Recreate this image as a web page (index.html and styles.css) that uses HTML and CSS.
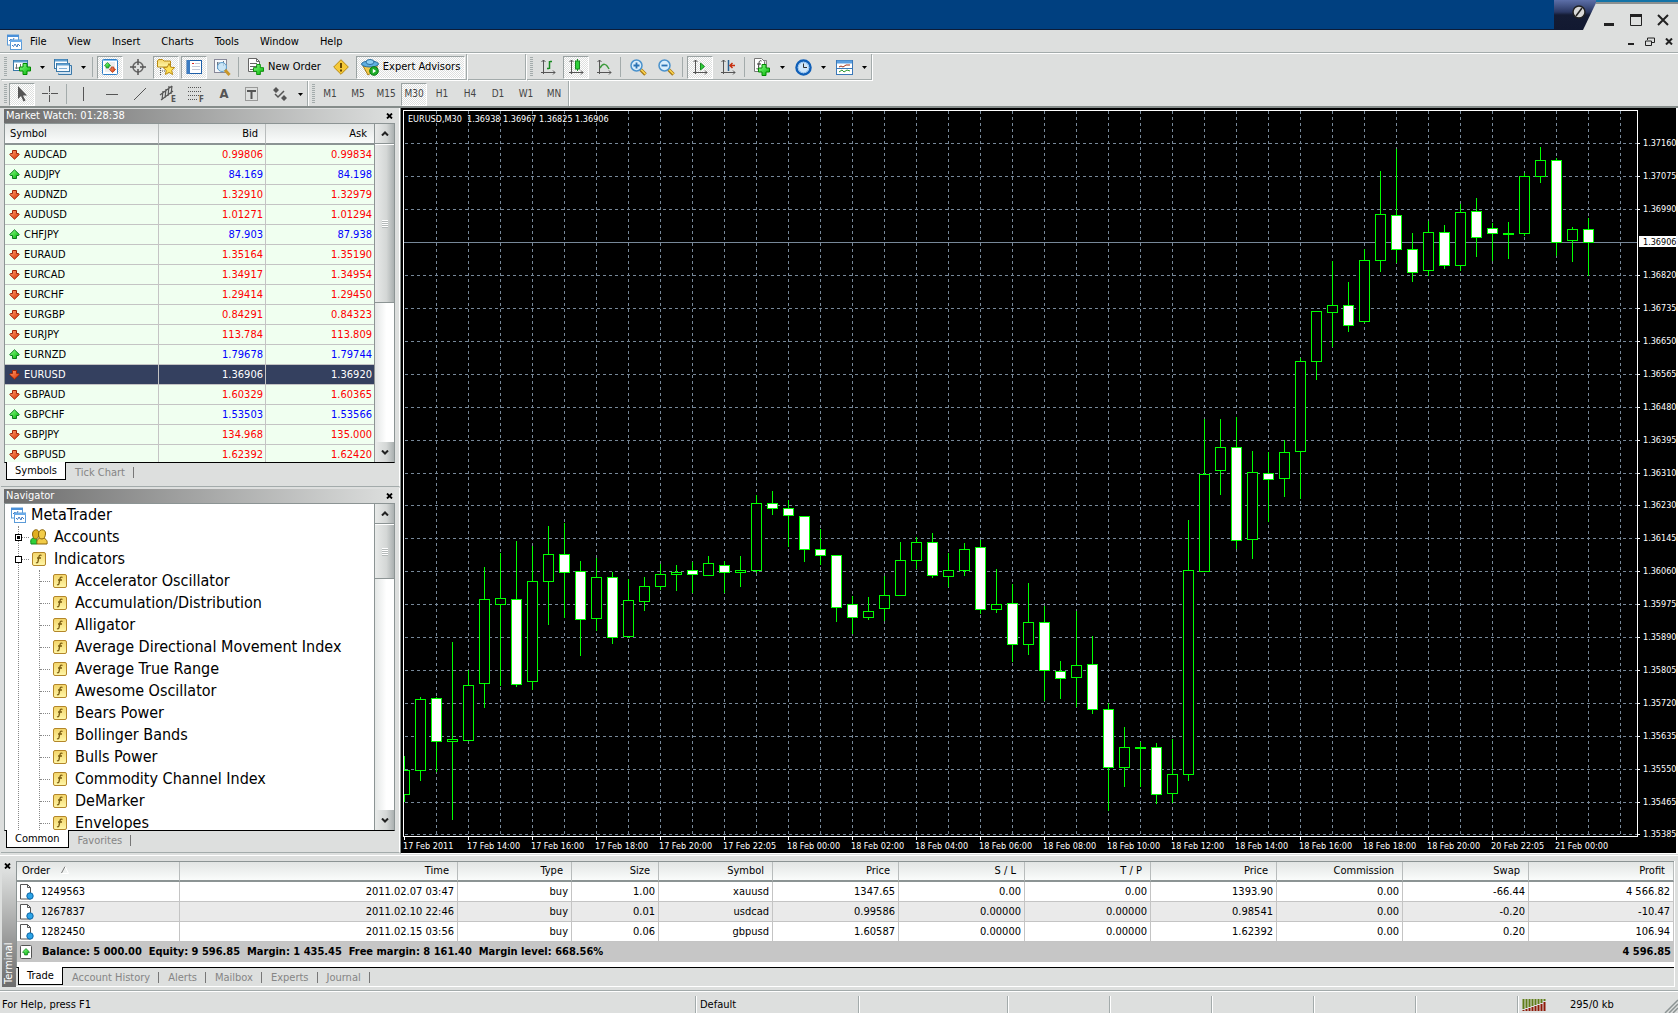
FILE: index.html
```html
<!DOCTYPE html>
<html lang="en">
<head>
<meta charset="utf-8">
<title>MetaTrader</title>
<link rel="stylesheet" href="styles.css">
</head>
<body>
<svg class="sprite" aria-hidden="true">
  <defs>
    <linearGradient id="gGreen" x1="0" y1="0" x2="1" y2="1"><stop offset="0" stop-color="#8dff8d"/><stop offset="1" stop-color="#00b400"/></linearGradient>
    <linearGradient id="gGold" x1="0" y1="0" x2="0" y2="1"><stop offset="0" stop-color="#f3d469"/><stop offset="1" stop-color="#fff7a8"/></linearGradient>
    <linearGradient id="gRed" x1="0" y1="0" x2="1" y2="1"><stop offset="0" stop-color="#ffa070"/><stop offset="1" stop-color="#d83000"/></linearGradient>
    <linearGradient id="gNavy" x1="0" y1="0" x2="0" y2="1"><stop offset="0" stop-color="#5c6fa8"/><stop offset=".4" stop-color="#2b3863"/><stop offset=".5" stop-color="#141b33"/><stop offset="1" stop-color="#121931"/></linearGradient>
  </defs>
  <symbol id="app" viewBox="0 0 16 16"><rect x="1.500" y="1" width="11" height="10" fill="#fff" stroke="#5b9bd8"/><path d="M1 2h12" stroke="#4a90d9" stroke-width="2"/><path d="M3 7l2-2 1 3 2-4" stroke="#3d78c0" fill="none"/><rect x="4.500" y="6" width="11" height="9.500" fill="#fff" stroke="#5b9bd8"/><path d="M4 7h12" stroke="#6aaae8" stroke-width="2"/><path d="M6 11l1.500 1.500L9 10l2 3 1-3 2 2" stroke="#3d78c0" fill="none"/></symbol>
  <symbol id="plus" viewBox="0 0 12 12"><path d="M4 .5h4V4h3.500v4H8v3.500H4V8H.5V4H4z" fill="url(#gGreen)" stroke="#008a00"/></symbol>
  <symbol id="newchart" viewBox="0 0 18 16"><rect x=".5" y="1.500" width="14" height="10" fill="#fff" stroke="#3a78a8"/><path d="M1 2.500h13" stroke="#5f9fd0" stroke-width="2"/><path d="M3.500 5v5M2 9h6M7.500 5v3" stroke="#777"/><use href="#plus" x="6" y="4" width="12" height="12"/></symbol>
  <symbol id="profiles" viewBox="0 0 18 16"><path d="M4.500 14.500v1h13v-9h-2" fill="#cfe2f2" stroke="#3a78a8"/><rect x=".5" y=".5" width="13" height="9" fill="#fff" stroke="#3a78a8"/><path d="M1 1.500h12" stroke="#5f9fd0" stroke-width="2"/><rect x="2.500" y="4.500" width="13" height="8" fill="#f4f9fd" stroke="#3a78a8"/><path d="M3 5.500h12" stroke="#5f9fd0" stroke-width="2"/><path d="M5 9.500h8" stroke="#7fb0d8"/></symbol>
  <symbol id="up" viewBox="0 0 11 11"><path d="M5.500 .8L10.300 5.500 9.500 6.500H7.500V9.500h-4V6.500H1.500L.7 5.500z" fill="url(#gGreen)" stroke="#0b7a1e"/></symbol>
  <symbol id="down" viewBox="0 0 11 11"><path d="M5.500 10.200L.7 5.500 1.500 4.500h2V1.500h4v3h2l.8 1z" fill="url(#gRed)" stroke="#a02408"/></symbol>
  <symbol id="watch" viewBox="0 0 16 16"><rect x=".5" y=".5" width="15" height="15" rx="1" fill="#fff" stroke="#2f7fc8"/><path d="M1 1.500h14" stroke="#8cc2ee"/><path d="M3 4h10M3 6h10M3 8h10M3 10h10M3 12h10" stroke="#ddd"/><use href="#up" x="2" y="3" width="7" height="7"/><use href="#down" x="7" y="7" width="7" height="7"/></symbol>
  <symbol id="cross" viewBox="0 0 16 16"><circle cx="8" cy="8" r="5" fill="none" stroke="#666" stroke-width="1.500"/><path d="M8 0v6M8 10v6M0 8h6M10 8h6" stroke="#555" stroke-width="1.500"/></symbol>
  <symbol id="favs" viewBox="0 0 18 16"><path d="M.5 2l1-1.500h4L7 2h6.500v6H.5z" fill="url(#gGold)" stroke="#b98a12"/><path d="M3.500 9v7M5 12h3" stroke="#555" stroke-dasharray="1 1"/><path d="M12 4.500l1.700 3.700 4 .4-3 2.800.9 4.100-3.600-2.100-3.600 2.100.9-4.100-3-2.800 4-.4z" fill="#ffe255" stroke="#b98a12"/></symbol>
  <symbol id="termwin" viewBox="0 0 16 16"><rect x="1" y="1.500" width="14.500" height="13" fill="#fff" stroke="#1e5fa8"/><path d="M2.500 1v14" stroke="#3c7cc2" stroke-width="3"/><path d="M6 4.500h2" stroke="#d22"/><path d="M9 4.500h5M6 7.500h8M6 10.500h8" stroke="#c4c8d8"/></symbol>
  <symbol id="tester" viewBox="0 0 18 17"><rect x="1.500" y=".5" width="12" height="13" fill="#f5f8fb" stroke="#889"/><path d="M4.500 3v7M4.500 4h3M10.500 2v5" stroke="#678"/><circle cx="9" cy="8" r="4.500" fill="#bfe0f5" fill-opacity=".8" stroke="#5fa0d0"/><path d="M12 11l4.500 5" stroke="#c8962a" stroke-width="3"/></symbol>
  <symbol id="order" viewBox="0 0 16 18"><path d="M.5.5h8l3 3v10H.5z" fill="#fff" stroke="#666"/><path d="M8.500.5v3h3M2 5.500h7M2 8.500h7M2 11.500h5" stroke="#666" fill="none"/><use href="#plus" x="5" y="6" width="11" height="11"/></symbol>
  <symbol id="warn" viewBox="0 0 16 16"><path d="M8 .7L15.300 8 8 15.300.7 8z" fill="#f5c938" stroke="#b98a12"/><path d="M8 4v5M8 10.500v2" stroke="#6a4a00" stroke-width="2"/></symbol>
  <symbol id="expert" viewBox="0 0 18 17"><path d="M2 7l5 9 9-6 0-4z" fill="#f2c84a" stroke="#a57a10"/><ellipse cx="9" cy="5" rx="8.500" ry="3" fill="#5faee0" stroke="#2c6f9f"/><ellipse cx="9" cy="3" rx="4" ry="2.500" fill="#8fd0f5" stroke="#2c6f9f"/><circle cx="13" cy="12" r="4.300" fill="#1fae2a" stroke="#0a7a14"/><path d="M11.800 9.800v4.400l3.300-2.200z" fill="#fff"/></symbol>
  <symbol id="bars" viewBox="0 0 16 16"><path d="M3.500 1v14M1 13.500h14" stroke="#555" fill="none"/><path d="M1.500 3l2-2 2 2M13 11.500l2 2-2 2" stroke="#555" fill="none"/><path d="M9.500 2v8M9 9.500H7M10 2.500h2" stroke="#178a20" stroke-width="1.500"/></symbol>
  <symbol id="candle" viewBox="0 0 16 16"><path d="M3.500 1v14M1 13.500h14" stroke="#555" fill="none"/><path d="M1.500 3l2-2 2 2M13 11.500l2 2-2 2" stroke="#555" fill="none"/><path d="M9.500 0v12" stroke="#178a20"/><rect x="7.500" y="2" width="4" height="8" fill="#2ed03a" stroke="#178a20"/></symbol>
  <symbol id="line" viewBox="0 0 16 16"><path d="M3.500 1v14M1 13.500h14" stroke="#555" fill="none"/><path d="M1.500 3l2-2 2 2M13 11.500l2 2-2 2" stroke="#555" fill="none"/><path d="M4 9c3-5 6-5 9 1" stroke="#3a9a3a" stroke-width="1.500" fill="none"/></symbol>
  <symbol id="zin" viewBox="0 0 17 17"><path d="M10.500 10.500l5 5" stroke="#a87a18" stroke-width="3.500"/><path d="M11 10.500l4.500 4.500" stroke="#ffd850" stroke-width="1.500"/><circle cx="6.500" cy="6.500" r="5.500" fill="#d8edfb" stroke="#4a92cc" stroke-width="1.500"/><path d="M6.500 3.500v6M3.500 6.500h6" stroke="#2a72b4" stroke-width="1.800"/></symbol>
  <symbol id="zout" viewBox="0 0 17 17"><path d="M10.500 10.500l5 5" stroke="#a87a18" stroke-width="3.500"/><path d="M11 10.500l4.500 4.500" stroke="#ffd850" stroke-width="1.500"/><circle cx="6.500" cy="6.500" r="5.500" fill="#d8edfb" stroke="#4a92cc" stroke-width="1.500"/><path d="M3.500 6.500h6" stroke="#2a72b4" stroke-width="1.800"/></symbol>
  <symbol id="scroll" viewBox="0 0 16 16"><path d="M3.500 1v14M1 13.500h14" stroke="#555" fill="none"/><path d="M1.500 3l2-2 2 2M13 11.500l2 2-2 2" stroke="#555" fill="none"/><path d="M8.500 4l4 3.500-4 3.500z" fill="#2ed03a" stroke="#178a20"/></symbol>
  <symbol id="shift" viewBox="0 0 16 16"><path d="M3.500 1v14M1 13.500h14" stroke="#555" fill="none"/><path d="M1.500 3l2-2 2 2M13 11.500l2 2-2 2" stroke="#555" fill="none"/><path d="M8.500 1v11" stroke="#2a6090" stroke-width="1.500"/><path d="M10 6.500h5M12.500 4L10 6.500 12.500 9" stroke="#c83010" stroke-width="1.500" fill="none"/></symbol>
  <symbol id="clock" viewBox="0 0 17 17"><circle cx="8.500" cy="8.500" r="7" fill="#fff" stroke="#0f5fb8" stroke-width="2.500"/><circle cx="8.500" cy="8.500" r="5.300" fill="#cfe6fa" stroke="#8fc0ee"/><path d="M8.500 4.500v4h3.500" stroke="#333" fill="none"/></symbol>
  <symbol id="template" viewBox="0 0 17 15"><rect x=".5" y=".5" width="16" height="14" fill="#fff" stroke="#3a78b8"/><path d="M1 2h15" stroke="#5a9fe0" stroke-width="3"/><path d="M3 7l2-1 2 1 3-2 4 0" stroke="#a03018" fill="none"/><path d="M1 8.500h15" stroke="#3a78b8"/><path d="M3 12l3-2 2 2 3-2 3 1" stroke="#2a9a30" fill="none"/></symbol>
  <symbol id="dd" viewBox="0 0 5 3"><path d="M0 0h5L2.500 3z" fill="#000"/></symbol>
  <symbol id="cursor" viewBox="0 0 16 16"><path d="M4 0v13l3-3 2.500 5.500 2-1L9 9.500h4z" fill="#555"/></symbol>
  <symbol id="hair" viewBox="0 0 16 16"><path d="M7.500 0v6M7.500 9v7M0 7.500h6M9 7.500h7" stroke="#555"/><path d="M7 7h1v1H7z" fill="#555"/></symbol>
  <symbol id="vline" viewBox="0 0 16 16"><path d="M7.500 1v14" stroke="#555"/></symbol>
  <symbol id="hline" viewBox="0 0 16 16"><path d="M2 8.500h12" stroke="#555"/></symbol>
  <symbol id="tline" viewBox="0 0 16 16"><path d="M2 14L14 2" stroke="#555"/></symbol>
  <symbol id="label" viewBox="0 0 16 16"><rect x="1.500" y="1.500" width="12" height="13" fill="none" stroke="#555" stroke-dasharray="1 1"/><path d="M3 5h9M7.500 5v8" stroke="#555" stroke-width="2"/></symbol>
  <symbol id="arrows" viewBox="0 0 16 16"><path d="M1 4l3-3 3 3-3 3zM9 12l3-3 3 3-3 3z" fill="#555"/><path d="M3 8l3 3 6-6" stroke="#555" stroke-width="1.500" fill="none"/></symbol>
  <symbol id="close" viewBox="0 0 7 6"><path d="M1 .5l5 5M6 .5l-5 5" stroke="#000" stroke-width="1.800"/></symbol>
  <symbol id="chevup" viewBox="0 0 8 5"><path d="M1 4.500l3-3 3 3" stroke="#222" stroke-width="2" fill="none"/></symbol>
  <symbol id="chevdn" viewBox="0 0 8 5"><path d="M1 .5l3 3 3-3" stroke="#222" stroke-width="2" fill="none"/></symbol>
  <symbol id="func" viewBox="0 0 14 14"><rect x=".5" y=".5" width="13" height="13" rx="1.500" fill="url(#gGold)" stroke="#b3862a"/><path d="M9.500 3.500c-1.500-1-2.300 0-2.600 1.500L6 9.500c-.3 1.300-1 1.600-2 1M5 6h4" fill="none" stroke="#7a5c10" stroke-width="1.300"/></symbol>
  <symbol id="people" viewBox="0 0 18 16"><path d="M1 15c-1-5 1-6 3-6s4 2 3 6z" fill="#2fd03a" stroke="#0f8a1c"/><path d="M2.500 5c0-5 6-6 6.500-1 0 3-1 6-3 6S2.500 8 2.500 5z" fill="#e0ae20" stroke="#8a6508"/><path d="M7 15c-1-5 2-6 5-6s6 2 5 6z" fill="#f2cc48" stroke="#8a6508"/><path d="M8.500 5c0-5 6.500-6 7-1 0 3-1 6-3.500 6S8.500 8 8.500 5z" fill="#f2cc48" stroke="#8a6508"/></symbol>
  <symbol id="doc" viewBox="0 0 14 16"><path d="M.5.5h7l3 3v11.500H.5z" fill="#fff" stroke="#555"/><path d="M7.500.5v3h3" fill="none" stroke="#555"/><circle cx="10" cy="12" r="3.200" fill="#2da3e6" stroke="#0d68a8"/></symbol>
  <symbol id="balance" viewBox="0 0 12 14"><rect x=".5" y=".5" width="11" height="13" rx="1" fill="#fff" stroke="#555"/><use href="#up" x="2" y="3" width="8" height="8"/></symbol>
</svg>

<header class="titlebar">
  <div class="titlebar-fill"></div>
  <svg class="titlebar-tab" viewBox="0 0 42 30" aria-hidden="true">
    <rect width="42" height="30" fill="#dddfde"/><path d="M0 0h42v3L29 30H0z" fill="url(#gNavy)"/>
    <circle cx="25" cy="12" r="6" fill="#d8d8d8" stroke="#222" stroke-width="1.500"/><path d="M22 16l6-8" stroke="#222" stroke-width="1.500"/>
  </svg>
  <div class="window-buttons">
    <button aria-label="Minimize"><svg width="12" height="12"><path d="M1 10.500h10" stroke="#222" stroke-width="3"/></svg></button>
    <button aria-label="Maximize"><svg width="12" height="12"><path d="M.5 1v10.500h11V1" fill="none" stroke="#222"/><path d="M0 1.500h12" stroke="#222" stroke-width="3"/></svg></button>
    <button aria-label="Close"><svg width="12" height="12"><path d="M1 1l10 10M11 1L1 11" stroke="#222" stroke-width="2"/></svg></button>
  </div>
</header>

<nav class="menubar">
  <svg class="menu-logo" width="16" height="16"><use href="#app"/></svg>
  <button>File</button><button>View</button><button>Insert</button><button>Charts</button><button>Tools</button><button>Window</button><button>Help</button>
  <div class="mdi-buttons">
    <button aria-label="Minimize chart"><svg width="8" height="8"><path d="M1 6h6" stroke="#222" stroke-width="2"/></svg></button>
    <button aria-label="Restore chart"><svg width="10" height="9"><path d="M2.500 3V1h7v4.500H7" fill="none" stroke="#222"/><path d="M.5 4h6v4.500h-6z" fill="#dddfde" stroke="#222"/></svg></button>
    <button aria-label="Close chart"><svg width="8" height="7"><path d="M1 .5l6 6M7 .5l-6 6" stroke="#222" stroke-width="2"/></svg></button>
  </div>
</nav>

<div class="toolbar">
  <div class="band">
    <i class="grip"></i>
    <button class="tb" aria-label="New chart"><svg width="18" height="16"><use href="#newchart"/></svg></button><button class="dd" aria-label="New chart menu"><svg width="5" height="3"><use href="#dd"/></svg></button>
    <button class="tb" aria-label="Profiles"><svg width="18" height="16"><use href="#profiles"/></svg></button><button class="dd" aria-label="Profiles menu"><svg width="5" height="3"><use href="#dd"/></svg></button>
    <i class="sep"></i>
    <button class="tb on" aria-label="Market Watch"><svg width="16" height="16"><use href="#watch"/></svg></button>
    <button class="tb" aria-label="Data Window"><svg width="16" height="16"><use href="#cross"/></svg></button>
    <button class="tb on" aria-label="Navigator"><svg width="18" height="16"><use href="#favs"/></svg></button>
    <button class="tb on" aria-label="Terminal"><svg width="16" height="16"><use href="#termwin"/></svg></button>
    <button class="tb" aria-label="Strategy Tester"><svg width="18" height="17"><use href="#tester"/></svg></button>
    <i class="sep"></i>
    <button class="tb wide"><svg width="16" height="18"><use href="#order"/></svg>New Order</button>
    <button class="tb" aria-label="MetaEditor"><svg width="16" height="16"><use href="#warn"/></svg></button>
    <button class="tb wide on"><svg width="18" height="17"><use href="#expert"/></svg>Expert Advisors</button>
  </div>
  <div class="band band-empty"></div>
  <div class="band">
    <i class="grip"></i>
    <button class="tb" aria-label="Bar chart"><svg width="16" height="16"><use href="#bars"/></svg></button>
    <button class="tb on" aria-label="Candlesticks"><svg width="16" height="16"><use href="#candle"/></svg></button>
    <button class="tb" aria-label="Line chart"><svg width="16" height="16"><use href="#line"/></svg></button>
    <i class="sep"></i>
    <button class="tb" aria-label="Zoom in"><svg width="17" height="17"><use href="#zin"/></svg></button>
    <button class="tb" aria-label="Zoom out"><svg width="17" height="17"><use href="#zout"/></svg></button>
    <i class="sep"></i>
    <button class="tb on" aria-label="Auto scroll"><svg width="16" height="16"><use href="#scroll"/></svg></button>
    <button class="tb" aria-label="Chart shift"><svg width="16" height="16"><use href="#shift"/></svg></button>
    <i class="sep"></i>
    <button class="tb" aria-label="Indicators"><svg width="16" height="18"><path d="M3.500 2.500h9v10" fill="none" stroke="#888"/><path d="M.5.5h7l3 3v10H.5z" fill="#fff" stroke="#777"/><path d="M7.500 3c-1.500-.8-2.200 0-2.400 1.500l-.6 5c-.2 1.500-1 1.800-2 1.200M3 6h4" fill="none" stroke="#333"/><use href="#plus" x="4" y="6" width="12" height="12"/></svg></button><button class="dd" aria-label="Indicators menu"><svg width="5" height="3"><use href="#dd"/></svg></button>
    <button class="tb" aria-label="Periods"><svg width="17" height="17"><use href="#clock"/></svg></button><button class="dd" aria-label="Periods menu"><svg width="5" height="3"><use href="#dd"/></svg></button>
    <button class="tb" aria-label="Templates"><svg width="17" height="15"><use href="#template"/></svg></button><button class="dd" aria-label="Templates menu"><svg width="5" height="3"><use href="#dd"/></svg></button>
  </div>
</div>

<div class="toolbar toolbar-last">
  <div class="band">
    <i class="grip"></i>
    <button class="tb on" aria-label="Cursor"><svg width="16" height="16"><use href="#cursor"/></svg></button>
    <button class="tb" aria-label="Crosshair"><svg width="16" height="16"><use href="#hair"/></svg></button>
    <i class="sep"></i>
    <button class="tb" aria-label="Vertical line"><svg width="16" height="16"><use href="#vline"/></svg></button>
    <button class="tb" aria-label="Horizontal line"><svg width="16" height="16"><use href="#hline"/></svg></button>
    <button class="tb" aria-label="Trendline"><svg width="16" height="16"><use href="#tline"/></svg></button>
    <button class="tb" aria-label="Equidistant channel"><svg width="18" height="18"><path d="M1 10L13 1M2 15L14 6M4 6l-1 9M7 4L6 13M10 1L9 11M13 1l-1 8" stroke="#555" stroke-width="1.200"/><text class="tag" x="12" y="17">E</text></svg></button>
    <button class="tb" aria-label="Fibonacci retracement"><svg width="18" height="18"><path d="M1 2.500h14M1 6.500h14M1 10.500h14M1 14.500h9" stroke="#555" stroke-dasharray="1 1"/><text class="tag" x="12" y="17">F</text></svg></button>
    <button class="tb tb-text">A</button>
    <button class="tb" aria-label="Text label"><svg width="16" height="16"><use href="#label"/></svg></button>
    <button class="tb" aria-label="Arrows"><svg width="16" height="16"><use href="#arrows"/></svg></button><button class="dd" aria-label="Arrows menu"><svg width="5" height="3"><use href="#dd"/></svg></button>
  </div>
  <div class="band">
    <i class="grip"></i>
    <button class="tb period">M1</button><button class="tb period">M5</button><button class="tb period">M15</button><button class="tb period on">M30</button><button class="tb period">H1</button><button class="tb period">H4</button><button class="tb period">D1</button><button class="tb period">W1</button><button class="tb period">MN</button>
  </div>
</div>

<main class="workspace">
  <aside class="side">
    <section class="panel">
      <div class="panel-title"><h2>Market Watch: 01:28:38</h2><button aria-label="Close Market Watch"><svg width="7" height="6"><use href="#close"/></svg></button></div>
      <div class="panel-body watch-body">
        <div class="scroll-content">
          <table class="quotes">
            <colgroup><col><col class="c-bid"><col class="c-ask"></colgroup>
            <thead><tr><th>Symbol</th><th>Bid</th><th>Ask</th></tr></thead>
            <tbody>
              <tr class="dn"><td><svg width="11" height="11"><use href="#down"/></svg>AUDCAD</td><td>0.99806</td><td>0.99834</td></tr>
              <tr class="up"><td><svg width="11" height="11"><use href="#up"/></svg>AUDJPY</td><td>84.169</td><td>84.198</td></tr>
              <tr class="dn"><td><svg width="11" height="11"><use href="#down"/></svg>AUDNZD</td><td>1.32910</td><td>1.32979</td></tr>
              <tr class="dn"><td><svg width="11" height="11"><use href="#down"/></svg>AUDUSD</td><td>1.01271</td><td>1.01294</td></tr>
              <tr class="up"><td><svg width="11" height="11"><use href="#up"/></svg>CHFJPY</td><td>87.903</td><td>87.938</td></tr>
              <tr class="dn"><td><svg width="11" height="11"><use href="#down"/></svg>EURAUD</td><td>1.35164</td><td>1.35190</td></tr>
              <tr class="dn"><td><svg width="11" height="11"><use href="#down"/></svg>EURCAD</td><td>1.34917</td><td>1.34954</td></tr>
              <tr class="dn"><td><svg width="11" height="11"><use href="#down"/></svg>EURCHF</td><td>1.29414</td><td>1.29450</td></tr>
              <tr class="dn"><td><svg width="11" height="11"><use href="#down"/></svg>EURGBP</td><td>0.84291</td><td>0.84323</td></tr>
              <tr class="dn"><td><svg width="11" height="11"><use href="#down"/></svg>EURJPY</td><td>113.784</td><td>113.809</td></tr>
              <tr class="up"><td><svg width="11" height="11"><use href="#up"/></svg>EURNZD</td><td>1.79678</td><td>1.79744</td></tr>
              <tr class="dn sel"><td><svg width="11" height="11"><use href="#down"/></svg>EURUSD</td><td>1.36906</td><td>1.36920</td></tr>
              <tr class="dn"><td><svg width="11" height="11"><use href="#down"/></svg>GBPAUD</td><td>1.60329</td><td>1.60365</td></tr>
              <tr class="up"><td><svg width="11" height="11"><use href="#up"/></svg>GBPCHF</td><td>1.53503</td><td>1.53566</td></tr>
              <tr class="dn"><td><svg width="11" height="11"><use href="#down"/></svg>GBPJPY</td><td>134.968</td><td>135.000</td></tr>
              <tr class="dn"><td><svg width="11" height="11"><use href="#down"/></svg>GBPUSD</td><td>1.62392</td><td>1.62420</td></tr>
            </tbody>
          </table>
        </div>
        <div class="scrollbar"><button aria-label="Scroll up"><svg width="8" height="5"><use href="#chevup"/></svg></button><div class="thumb thumb-long"></div><button class="last" aria-label="Scroll down"><svg width="8" height="5"><use href="#chevdn"/></svg></button></div>
      </div>
      <div class="tabs"><button class="active">Symbols</button><button>Tick Chart</button></div>
    </section>
    <section class="panel panel-grow">
      <div class="panel-title"><h2>Navigator</h2><button aria-label="Close Navigator"><svg width="7" height="6"><use href="#close"/></svg></button></div>
      <div class="panel-body">
        <div class="scroll-content tree">
          <div class="node root"><svg width="16" height="16"><use href="#app"/></svg>MetaTrader</div>
          <ul class="level1">
            <li><div class="node"><i class="box plus"></i><i class="dots"></i><svg class="people" width="18" height="16"><use href="#people"/></svg>Accounts</div></li>
            <li><div class="node"><i class="box"></i><i class="dots"></i><svg width="14" height="14"><use href="#func"/></svg>Indicators</div>
              <ul class="level2">
                <li class="node"><i class="dots"></i><svg width="14" height="14"><use href="#func"/></svg>Accelerator Oscillator</li>
                <li class="node"><i class="dots"></i><svg width="14" height="14"><use href="#func"/></svg>Accumulation/Distribution</li>
                <li class="node"><i class="dots"></i><svg width="14" height="14"><use href="#func"/></svg>Alligator</li>
                <li class="node"><i class="dots"></i><svg width="14" height="14"><use href="#func"/></svg>Average Directional Movement Index</li>
                <li class="node"><i class="dots"></i><svg width="14" height="14"><use href="#func"/></svg>Average True Range</li>
                <li class="node"><i class="dots"></i><svg width="14" height="14"><use href="#func"/></svg>Awesome Oscillator</li>
                <li class="node"><i class="dots"></i><svg width="14" height="14"><use href="#func"/></svg>Bears Power</li>
                <li class="node"><i class="dots"></i><svg width="14" height="14"><use href="#func"/></svg>Bollinger Bands</li>
                <li class="node"><i class="dots"></i><svg width="14" height="14"><use href="#func"/></svg>Bulls Power</li>
                <li class="node"><i class="dots"></i><svg width="14" height="14"><use href="#func"/></svg>Commodity Channel Index</li>
                <li class="node"><i class="dots"></i><svg width="14" height="14"><use href="#func"/></svg>DeMarker</li>
                <li class="node"><i class="dots"></i><svg width="14" height="14"><use href="#func"/></svg>Envelopes</li>
              </ul>
            </li>
          </ul>
        </div>
        <div class="scrollbar"><button aria-label="Scroll up"><svg width="8" height="5"><use href="#chevup"/></svg></button><div class="thumb"></div><button class="last" aria-label="Scroll down"><svg width="8" height="5"><use href="#chevdn"/></svg></button></div>
      </div>
      <div class="tabs"><button class="active">Common</button><button>Favorites</button></div>
    </section>
  </aside>
  <section class="chart"><svg id="chart" role="img" aria-label="EURUSD, 30 minute candlestick chart"></svg></section>
</main>

<section class="terminal">
  <div class="terminal-side"><button aria-label="Close Terminal"><svg width="7" height="6"><use href="#close"/></svg></button><h2>Terminal</h2></div>
  <div class="terminal-main">
    <table class="orders">
      <colgroup><col class="w-order"><col class="w-time"><col class="w-type"><col class="w-size"><col class="w-type"><col class="w-num"><col class="w-num"><col class="w-num"><col class="w-num"><col class="w-num"><col class="w-num"><col></colgroup>
      <thead><tr><th>Order <svg class="sort" width="8" height="8"><path d="M.5 7L4 .5" stroke="#777" fill="none"/><path d="M4 .5L7.500 7.500H.5" stroke="#fff" fill="none"/></svg></th><th>Time</th><th>Type</th><th>Size</th><th>Symbol</th><th>Price</th><th>S / L</th><th>T / P</th><th>Price</th><th>Commission</th><th>Swap</th><th>Profit</th></tr></thead>
      <tbody>
        <tr><td><svg width="14" height="16"><use href="#doc"/></svg>1249563</td><td>2011.02.07 03:47</td><td>buy</td><td>1.00</td><td>xauusd</td><td>1347.65</td><td>0.00</td><td>0.00</td><td>1393.90</td><td>0.00</td><td>-66.44</td><td>4 566.82</td></tr>
        <tr><td><svg width="14" height="16"><use href="#doc"/></svg>1267837</td><td>2011.02.10 22:46</td><td>buy</td><td>0.01</td><td>usdcad</td><td>0.99586</td><td>0.00000</td><td>0.00000</td><td>0.98541</td><td>0.00</td><td>-0.20</td><td>-10.47</td></tr>
        <tr><td><svg width="14" height="16"><use href="#doc"/></svg>1282450</td><td>2011.02.15 03:56</td><td>buy</td><td>0.06</td><td>gbpusd</td><td>1.60587</td><td>0.00000</td><td>0.00000</td><td>1.62392</td><td>0.00</td><td>0.20</td><td>106.94</td></tr>
      </tbody>
      <tfoot><tr><td colspan="11"><svg width="12" height="14"><use href="#balance"/></svg>Balance: 5 000.00&nbsp; Equity: 9 596.85&nbsp; Margin: 1 435.45&nbsp; Free margin: 8 161.40&nbsp; Margin level: 668.56%</td><td>4 596.85</td></tr></tfoot>
    </table>
    <div class="tabs"><button class="active">Trade</button><button>Account History</button><button>Alerts</button><button>Mailbox</button><button>Experts</button><button>Journal</button></div>
  </div>
</section>

<footer class="status">
  <span class="s-help">For Help, press F1</span><span class="s-default">Default</span><span class="s-a"></span><span class="s-b"></span><span class="s-b"></span><span class="s-b"></span><span class="s-b"></span><span class="s-b"></span>
  <span class="s-net"><svg width="24" height="12"><path d="M1.500 0v10M4.500 0v9M7.500 0v8M10.500 0v7M13.500 0v6M16.500 0v5M19.500 0v4M22.500 0v2" stroke="#5f7d18" stroke-width="2"/><path d="M1.500 11v1M4.500 10v2M7.500 9v3M10.500 8v4M13.500 7v5M16.500 6v6M19.500 5v7M22.500 3v9" stroke="#8f1a08" stroke-width="2"/></svg>295/0 kb<svg class="resize" width="14" height="14"><path d="M1 14L14 1M5 14l9-9M9 14l5-5" stroke="#8c9494" stroke-width="1.500"/></svg></span>
</footer>
<script src="chart.js"></script>
</body>
</html>
```

FILE: styles.css
```css
:root {
  --face: #dddfde;
  --shade: #a3abab;
  --grid: #c4c4c4;
}

* { box-sizing: border-box; }

body {
  margin: 0;
  height: 100vh;
  display: flex;
  flex-direction: column;
  overflow: hidden;
  background: var(--face);
  color: #000;
  font: 11px/14px "DejaVu Sans Condensed", "DejaVu Sans", sans-serif;
}

button {
  padding: 0;
  border: 0;
  background: none;
  color: inherit;
  font: inherit;
  white-space: nowrap;
}

h2 { margin: 0; font: inherit; }
svg { display: block; flex: none; }
.sprite { position: absolute; width: 0; height: 0; }

/* Title and menu */
.titlebar { display: flex; height: 30px; flex: none; }
.titlebar-fill { flex: 1; background: #004080; border-bottom: 1px solid #0c1c38; }
.titlebar-tab { width: 42px; height: 30px; }
.window-buttons {
  display: flex;
  width: 82px;
  padding: 8px 2px 0 0;
  border-top: 2px solid #1474a8;
  box-shadow: inset 0 2px 0 #8c9090;
}
.window-buttons button { flex: 1; display: grid; place-items: center; }

.menubar {
  display: flex;
  align-items: center;
  gap: 21px;
  height: 24px;
  flex: none;
  padding: 0 0 0 6px;
  border-bottom: 1px solid #fff;
  box-shadow: inset 0 -1px 0 var(--shade);
}
.menu-logo { margin-right: -13px; }
.mdi-buttons { display: flex; margin-left: auto; }
.mdi-buttons button { width: 19px; display: grid; place-items: center; }

/* Toolbars */
.toolbar { display: flex; height: 27px; flex: none; padding-left: 1px; }
.toolbar-last { border-bottom: 2px solid #858c8a; }
.band {
  display: flex;
  align-items: center;
  padding: 1px 0 0 3px;
  border-right: 1px solid var(--shade);
  border-bottom: 1px solid var(--shade);
  box-shadow: 1px 1px 0 #fff;
  margin-right: 1px;
  margin-bottom: 1px;
}
.toolbar-last .band { border-bottom: 0; box-shadow: 1px 0 0 #fff; margin-bottom: 0; }
.band-empty { width: 58px; }
.grip {
  width: 3px;
  height: 20px;
  margin-right: 1px;
  background: repeating-linear-gradient(#a3abab 0 1px, #dddfde 1px 2px);
}
.sep { width: 2px; height: 20px; margin: 0 2px; border-left: 1px solid var(--shade); }
.tb {
  display: flex;
  align-items: center;
  justify-content: center;
  gap: 4px;
  width: 26px;
  height: 23px;
  margin: 0 1px;
  border: 1px solid transparent;
}
.tb.on {
  border-color: #9aa2a2 #fff #fff #9aa2a2;
  background: repeating-conic-gradient(#fff 0 25%, #dddfde 0 50%) 0 0 / 2px 2px;
}
.tb.wide { width: auto; padding: 0 4px; }
.tb-text { color: #555; font-size: 13px; font-weight: 700; }
.tag { font-size: 8px; font-weight: 700; fill: #555; }
.period { color: #444; font-size: 10px; }
.dd { width: 13px; height: 23px; display: grid; place-items: center; }

/* Workspace */
.workspace { display: grid; grid-template-columns: 400px minmax(0, 1fr); flex: 1; min-height: 0; }
.side { display: flex; flex-direction: column; min-height: 0; padding-left: 1px; }
.panel {
  display: flex;
  flex-direction: column;
  padding: 1px 4px 3px 3px;
  border-bottom: 1px solid var(--shade);
  border-right: 1px solid #fff;
  margin-bottom: 1px;
}
.panel-grow { flex: 1; min-height: 0; padding-bottom: 1px; margin-bottom: 2px; }
.panel-title {
  display: flex;
  align-items: center;
  justify-content: space-between;
  height: 14px;
  flex: none;
  padding: 0 2px;
  background: linear-gradient(90deg, #6c6c6c, #dddfde);
  color: #fff;
}
.panel-title button { width: 8px; height: 12px; display: grid; place-items: center; }
.panel-body {
  display: flex;
  flex: 1;
  min-height: 0;
  border: 1px solid #8c9494;
  border-bottom: 1px solid #000;
  background: #fff;
}
.watch-body { flex: none; height: 340px; }
.scroll-content { flex: 1; min-width: 0; overflow: hidden; }

table { border-collapse: separate; border-spacing: 0; table-layout: fixed; width: 100%; }
th, td { padding: 0; font-weight: 400; text-align: right; white-space: nowrap; }
th:first-child, td:first-child { text-align: left; }
td svg { display: inline-block; vertical-align: middle; margin-right: 7px; }
th { background: linear-gradient(#e2e5e4, #fafcfb); border-right: 1px solid #b8bcbc; border-bottom: 2px solid #8c9494; }

.quotes th { height: 21px; padding: 0 7px 0 5px; }
.quotes td {
  height: 20px;
  padding: 0 2px 0 4px;
  background: #f0fff0;
  border-right: 1px solid var(--grid);
  border-bottom: 1px solid var(--grid);
}
.quotes td svg { margin-right: 4px; }
.quotes th:last-child, .quotes td:last-child { border-right: 0; }
.c-bid { width: 107px; }
.c-ask { width: 108px; }
.dn td + td { color: #f00; }
.up td + td { color: #00f; }
.quotes .sel td, .quotes .sel td + td { background: #34405f; color: #fff; }

.scrollbar {
  display: flex;
  flex-direction: column;
  width: 20px;
  border-left: 1px solid #8c9494;
  background: linear-gradient(90deg, #e4e7e6, #fff 60%);
}
.scrollbar button, .thumb {
  height: 20px;
  flex: none;
  display: grid;
  place-items: center;
  border-bottom: 1px solid #8c9494;
  background: linear-gradient(90deg, #e8eae9, #d4d7d6 60%, #aab0b0);
}
.scrollbar .last { margin-top: auto; border: 0; }
.thumb { height: 55px; border-top: 1px solid #fff; }
.thumb::after { content: ""; width: 6px; height: 8px; background: repeating-linear-gradient(#fff 0 1px, #b4b9b9 1px 2px); }
.thumb-long { height: 159px; }

.tabs { display: flex; height: 20px; flex: none; padding-left: 2px; color: #858585; }
.tabs button { height: 19px; padding: 0 9px; position: relative; }
.tabs button + button::after {
  content: "";
  position: absolute;
  right: 0;
  top: 4px;
  height: 11px;
  border-right: 1px solid #777;
}
.tabs .active {
  height: 18px;
  margin-top: -1px;
  padding: 0 8px;
  border: solid #000;
  border-width: 0 1px 1px;
  background: #fff;
  color: #000;
}

/* Navigator tree */
.tree { font-size: 16px; line-height: 22px; }
.tree ul { list-style: none; margin: 0; padding: 0; border-left: 1px dotted #888; }
.node { display: flex; align-items: center; height: 22px; white-space: nowrap; }
.root { gap: 5px; padding-left: 5px; }
.tree .level1 { margin-left: 13px; }
.tree .level2 { margin-left: 20px; }
.node svg { margin: 0 8px 0 3px; }
.root svg { margin: 0; }
.node .people { margin: 0 6px 0 1px; }
.box { width: 7px; height: 7px; margin-left: -4px; border: 1px solid #000; background: #fff; }
.plus { background: #000; box-shadow: inset 0 0 0 1px #fff; }
.dots { width: 7px; border-top: 1px dotted #888; }
.level2 .dots { width: 10px; }

/* Chart */
.chart {
  min-width: 0;
  min-height: 0;
  margin-bottom: 1px;
  border: solid #858c8a;
  border-width: 0 0 0 1px;
  border-right: 2px solid #fff;
  border-bottom: 1px solid #fff;
  background: #000;
  overflow: hidden;
}
#chart { width: 100%; height: 100%; font-size: 9px; }

/* Terminal */
.terminal { display: flex; height: 136px; flex: none; padding: 5px 3px 3px 2px; border-bottom: 1px solid var(--shade); border-top: 1px solid #fff; }
.terminal-side { display: flex; flex-direction: column; width: 14px; }
.terminal-side button { height: 10px; padding-left: 2px; }
.terminal-side h2 {
  flex: 1;
  writing-mode: vertical-rl;
  transform: rotate(180deg);
  padding-top: 3px;
  line-height: 13px;
  background: linear-gradient(#6c6c6c, #dddfde);
  color: #fff;
}
.terminal-main { flex: 1; min-width: 0; border: solid #fff; border-width: 0 1px 1px 0; }
.orders { border-top: 1px solid #8c9494; border-bottom: 1px solid #000; border-left: 1px solid #8c9494; background: #fff; padding-bottom: 5px; }
.orders th { height: 20px; padding: 0 8px 0 5px; }
.orders .sort { display: inline-block; margin-left: 8px; }
.orders td { height: 20px; padding: 0 3px; border-right: 1px solid var(--grid); border-bottom: 1px solid var(--grid); }
.orders tbody tr:nth-child(2) td { background: #eaeaea; }
.orders tfoot td { background: #c6c6c6; border: 0; font-weight: 700; }
.orders tfoot svg { margin-right: 10px; }
.w-order { width: 163px; }
.w-time { width: 278px; }
.w-type { width: 114px; }
.w-size { width: 87px; }
.w-num { width: 126px; }

/* Status bar */
.status { display: flex; align-items: stretch; height: 22px; flex: none; padding-top: 4px; border-top: 1px solid #fff; }
.status span { display: flex; align-items: center; border-left: 1px solid var(--shade); box-shadow: inset 1px 0 0 #fff; padding-left: 4px; }
.status .s-help { flex: 1; border: 0; box-shadow: none; padding-left: 2px; }
.s-default { width: 163px; }
.s-a { width: 149px; }
.s-b { width: 102px; }
.status .s-net { width: 161px; gap: 24px; }
.status .resize { margin-left: auto; align-self: flex-end; }
```

FILE: chart.js
```js
// Candles, 16px apart: [high, body top, body bottom, low, falling]
const candles = [
  [756, 770, 794, 801, 0], [697, 699, 770, 780, 0], [697, 698, 741, 771, 1], [642, 739, 741, 819, 0],
  [670, 685, 740, 740, 0], [567, 599, 683, 707, 0], [553, 598, 604, 685, 0], [541, 599, 684, 686, 1],
  [546, 581, 681, 689, 0], [526, 554, 581, 624, 0], [523, 554, 572, 617, 1], [561, 571, 619, 655, 1],
  [558, 577, 618, 630, 0], [572, 577, 637, 643, 1], [579, 600, 636, 637, 0], [577, 586, 601, 610, 0],
  [564, 574, 586, 589, 0], [565, 572, 574, 590, 0], [562, 570, 574, 592, 1], [556, 563, 575, 575, 0],
  [561, 565, 572, 592, 1], [556, 570, 572, 586, 0], [495, 503, 570, 572, 0], [491, 503, 508, 514, 1],
  [500, 508, 515, 546, 1], [516, 516, 549, 561, 1], [529, 549, 555, 564, 1], [555, 555, 607, 621, 1],
  [596, 604, 617, 633, 1], [597, 611, 617, 619, 0], [576, 595, 608, 620, 0], [542, 560, 595, 595, 0],
  [537, 542, 560, 568, 0], [533, 542, 575, 577, 1], [553, 570, 576, 586, 0], [543, 549, 570, 575, 0],
  [540, 547, 609, 613, 1], [569, 604, 609, 612, 0], [584, 603, 644, 661, 1], [583, 622, 644, 654, 0],
  [606, 622, 670, 700, 1], [661, 671, 678, 698, 1], [611, 665, 677, 706, 0], [636, 664, 709, 713, 1],
  [703, 709, 767, 810, 1], [727, 747, 767, 786, 0], [742, 747, 748, 786, 0], [743, 747, 794, 803, 1],
  [739, 774, 793, 802, 0], [520, 570, 774, 780, 0], [419, 474, 571, 571, 0], [419, 447, 470, 494, 0],
  [417, 447, 540, 548, 1], [451, 472, 539, 558, 0], [452, 473, 479, 521, 1], [440, 452, 478, 496, 0],
  [358, 361, 451, 498, 0], [311, 311, 361, 379, 0], [261, 305, 312, 346, 0], [282, 305, 325, 331, 1],
  [249, 260, 321, 322, 0], [171, 214, 260, 271, 0], [149, 215, 249, 262, 1], [233, 249, 272, 281, 1],
  [221, 232, 270, 275, 0], [225, 232, 265, 268, 1], [204, 212, 265, 270, 0], [198, 211, 237, 256, 1],
  [223, 228, 233, 260, 1], [222, 233, 234, 258, 0], [173, 176, 233, 235, 0], [147, 160, 176, 182, 0],
  [158, 160, 242, 255, 1], [227, 229, 240, 261, 0], [218, 229, 242, 275, 1]
];
const prices = [
  [143, '1.37160'], [176, '1.37075'], [209, '1.36990'], [275, '1.36820'], [308, '1.36735'],
  [341, '1.36650'], [374, '1.36565'], [407, '1.36480'], [440, '1.36395'], [473, '1.36310'],
  [505, '1.36230'], [538, '1.36145'], [571, '1.36060'], [604, '1.35975'], [637, '1.35890'],
  [670, '1.35805'], [703, '1.35720'], [736, '1.35635'], [769, '1.35550'], [802, '1.35465'], [834, '1.35385']
];
const times = [
  '17 Feb 2011', '17 Feb 14:00', '17 Feb 16:00', '17 Feb 18:00', '17 Feb 20:00', '17 Feb 22:05',
  '18 Feb 00:00', '18 Feb 02:00', '18 Feb 04:00', '18 Feb 06:00', '18 Feb 08:00', '18 Feb 10:00',
  '18 Feb 12:00', '18 Feb 14:00', '18 Feb 16:00', '18 Feb 18:00', '18 Feb 20:00', '20 Feb 22:05', '21 Feb 00:00'
];

const svg = document.getElementById('chart');
const originX = 401, originY = 108, left = 403, top0 = 110, bottom = 836, first = 404, last = 242;

function draw() {
  const w = svg.clientWidth, h = svg.clientHeight;
  const right = originX + w - 39;
  svg.setAttribute('viewBox', `${originX} ${originY} ${w} ${h}`);
  svg.setAttribute('preserveAspectRatio', 'xMinYMin');
  let grid = '', ticks = '', bodies = '', labels = '';
  for (let x = first + 32; x < right; x += 32) grid += `M${x + .5} ${top0 + 1}V${bottom}`;
  for (const [y, text] of prices) {
    grid += `M${left + 2} ${y + .5}H${right}`;
    ticks += `M${right} ${y + .5}h3`;
    labels += `<text x="${right + 6}" y="${y + 3}">${text}</text>`;
  }
  times.forEach((text, i) => {
    const x = first + i * 64;
    ticks += `M${x + .5} ${bottom}v4`;
    labels += `<text x="${x - 1}" y="849">${text}</text>`;
  });
  candles.forEach(([hi, a, b, lo, falling], i) => {
    const x = first + i * 16;
    bodies += `<path d="M${x + .5} ${hi}V${lo + 1}"/>` +
      `<rect x="${x - 4.5}" y="${a + .5}" width="10" height="${b - a}" fill="${falling ? '#fff' : '#000'}"/>`;
  });
  svg.innerHTML = `
    <clipPath id="plot"><rect x="${left + 1}" y="${top0}" width="${right - left}" height="${bottom - top0}"/></clipPath>
    <g shape-rendering="crispEdges" fill="none">
      <path d="${grid}" stroke="#778899" stroke-dasharray="3 3"/>
      <path d="M${left} ${last + .5}H${right}" stroke="#778899"/>
      <g clip-path="url(#plot)" stroke="#0f0">${bodies}</g>
      <path d="M${left + .5} ${top0 + .5}H${right + .5}V${bottom + .5}H${left + .5}Z${ticks}" stroke="#fff"/>
      <rect x="${right + 2}" y="${last - 6}" width="38" height="11" fill="#fff"/>
    </g>
    <g fill="#fff">${labels}<text x="408" y="122" xml:space="preserve">EURUSD,M30  1.36938 1.36967 1.36825 1.36906</text></g>
    <text x="${right + 6}" y="${last + 3}" fill="#000">1.36906</text>`;
}
draw();
addEventListener('resize', draw);
```
